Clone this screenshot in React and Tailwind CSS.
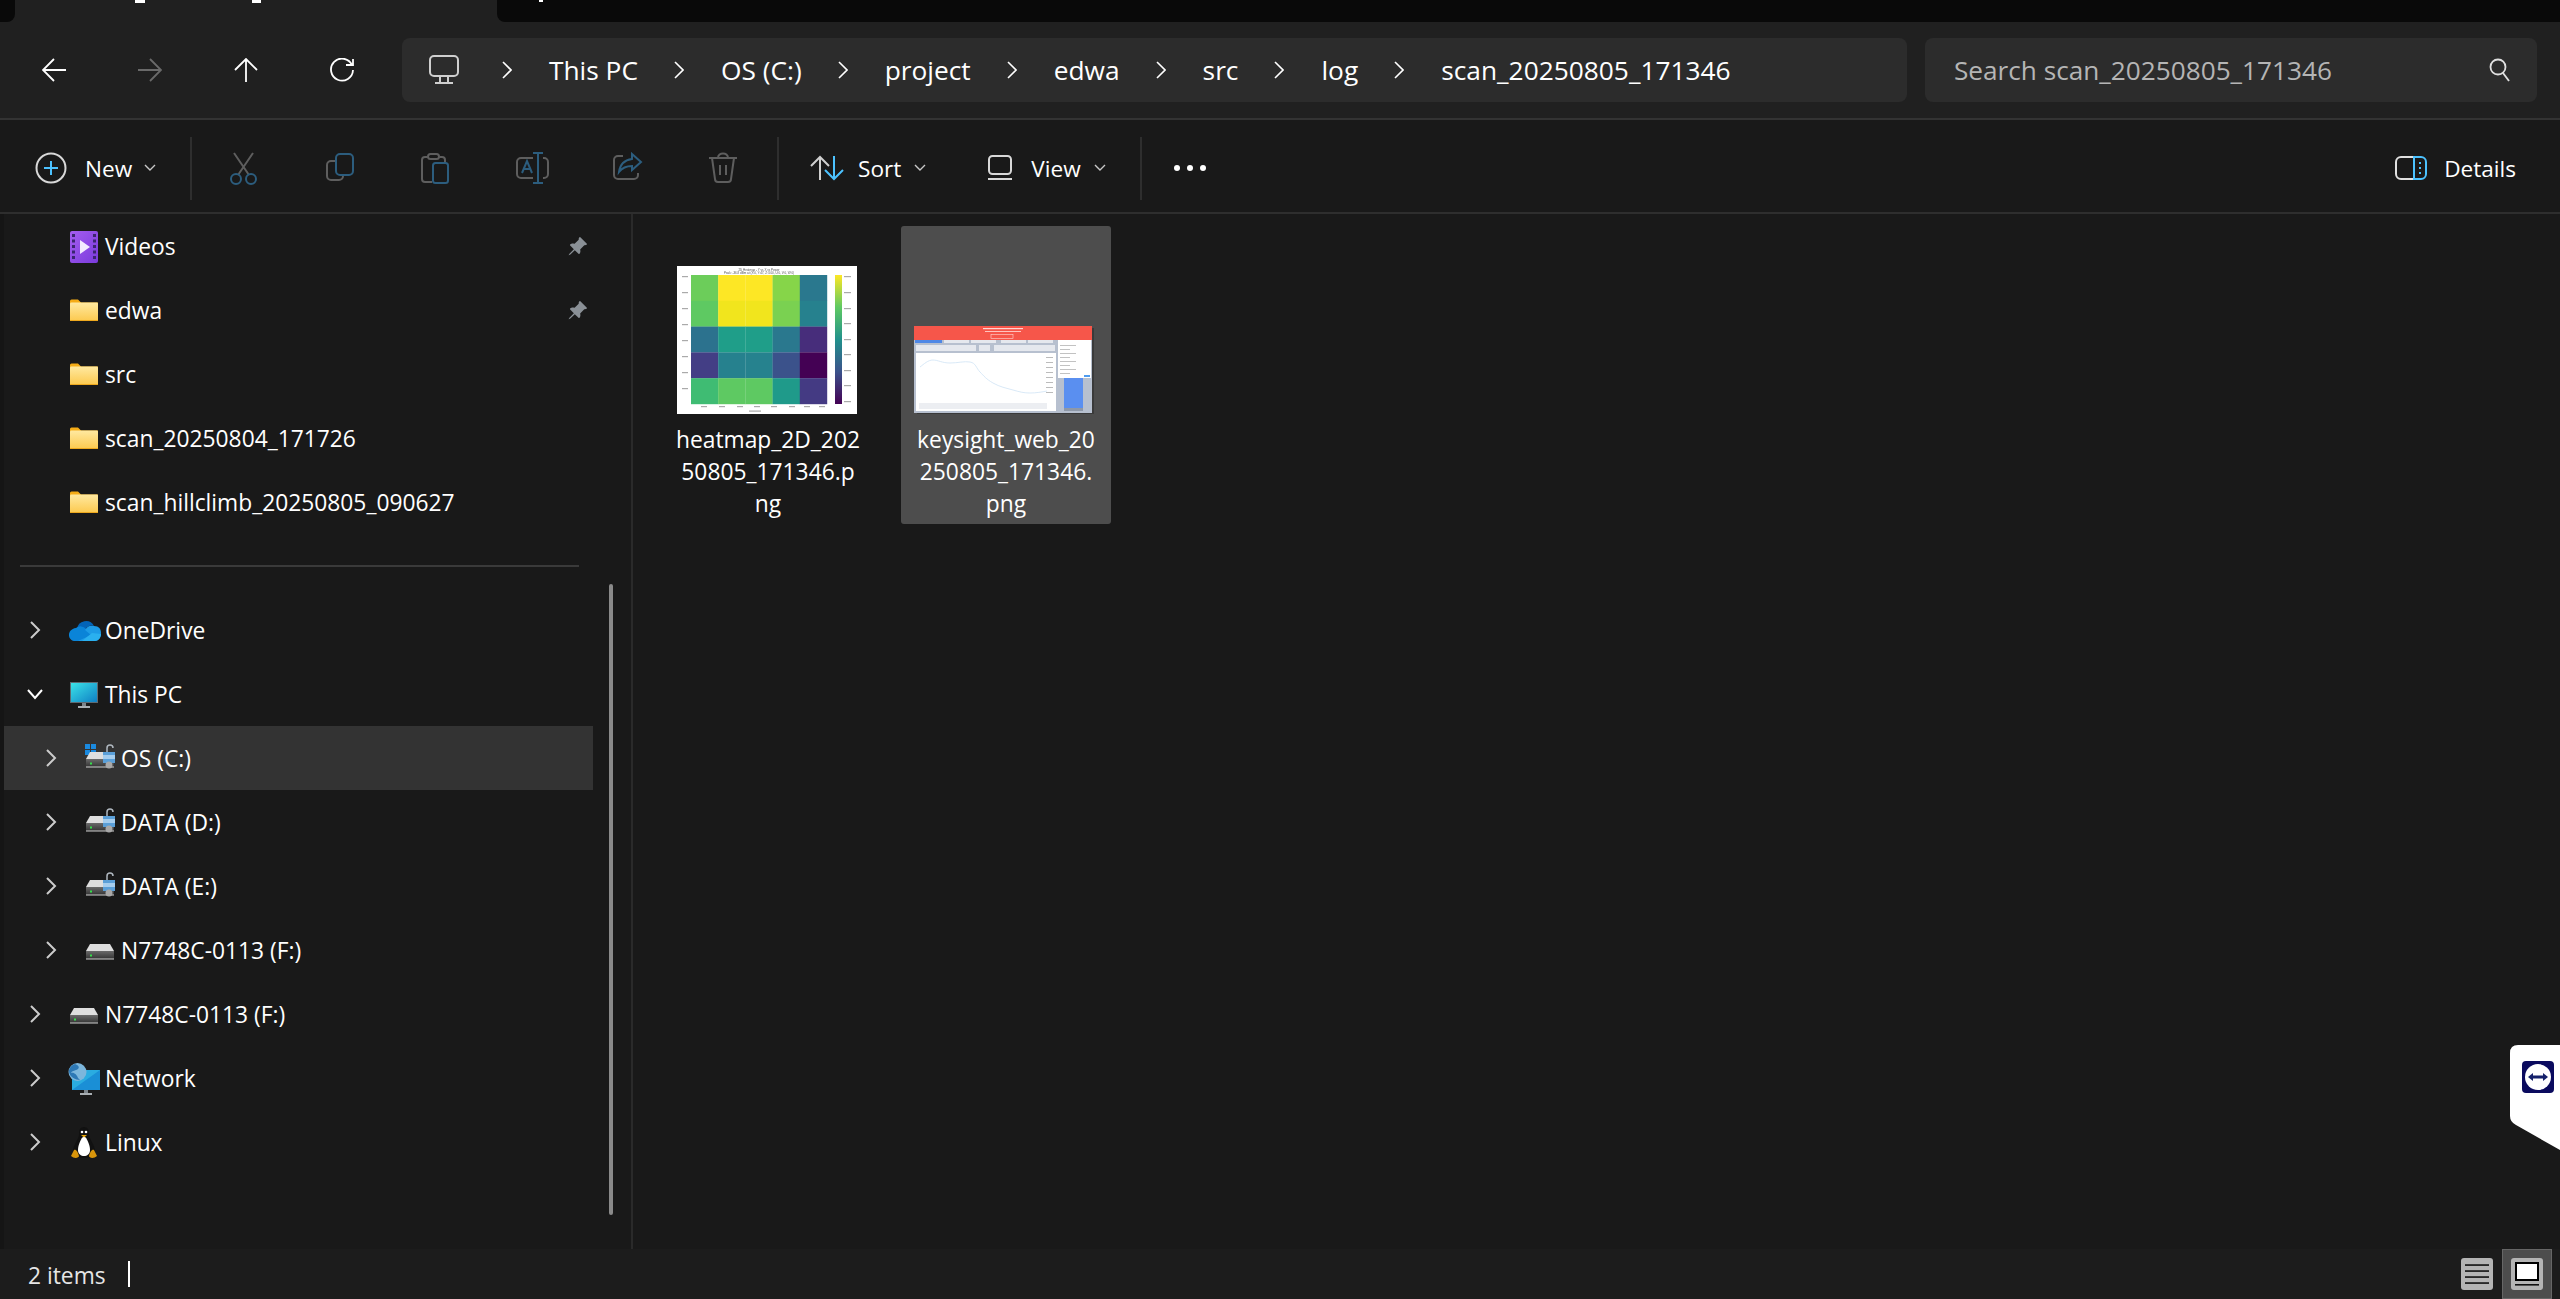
import React from "react";
import { BsPinAngleFill } from "react-icons/bs";

const Chevron = ({ down, className = "" }) => (
  <svg width="18" height="18" viewBox="0 0 18 18" fill="none" stroke="currentColor" strokeWidth="2" className={className}>
    {down ? <path d="M2 5l7 8 7-8" /> : <path d="M5 1l8 8-8 8" />}
  </svg>
);

const SmallCaret = () => (
  <svg width="12" height="8" viewBox="0 0 12 8" fill="none" stroke="#c8c8c8" strokeWidth="1.4">
    <path d="M1 1l5 5 5-5" />
  </svg>
);

const NavIcons = {
  back: <path d="M24 12H1M12 1L1 12l11 11" />,
  forward: <path d="M0 12h23M12 1l11 11-11 11" />,
  up: <path d="M12 24V1M1 12L12 1l11 11" />,
  refresh: <path d="M22 7A11 11 0 1 0 23 12M23 1v6h-7" />,
};

const NavButton = ({ icon, muted }) => (
  <div className="w-[96px] flex justify-center">
    <svg width="24" height="24" viewBox="0 0 24 24" fill="none" stroke={muted ? "#6a6a6a" : "#fff"} strokeWidth="1.8">
      {NavIcons[icon]}
    </svg>
  </div>
);

const BLUE = "#2c5d7e";
const GREY = "#5e5e5e";

const ToolIcons = {
  cut: (
    <>
      <path d="M6 1l15 22M25 1L10 23" stroke={GREY} />
      <circle cx="8" cy="27" r="5" stroke={BLUE} />
      <circle cx="23" cy="27" r="5" stroke={BLUE} />
    </>
  ),
  copy: (
    <>
      <rect x="12" y="2" width="17" height="21" rx="4" stroke={BLUE} />
      <path d="M11 9H7a4 4 0 0 0-4 4v11a4 4 0 0 0 4 4h8a4 4 0 0 0 4-4" stroke={GREY} />
    </>
  ),
  paste: (
    <>
      <path d="M8 5H5a3 3 0 0 0-3 3v19a3 3 0 0 0 3 3h7M19 5h3a3 3 0 0 1 3 3v3" stroke={GREY} />
      <rect x="8" y="2" width="11" height="5" rx="2.5" stroke={GREY} />
      <rect x="13" y="11" width="15" height="20" rx="2.5" stroke={BLUE} />
    </>
  ),
  rename: (
    <>
      <path d="M17 6H5a4 4 0 0 0-4 4v12a4 4 0 0 0 4 4h12M27 6h1a4 4 0 0 1 4 4v12a4 4 0 0 1-4 4h-1" stroke={GREY} />
      <path d="M22 1v30M17 1h10M17 31h10M6 21l5-12 5 12M8 17h6" stroke={BLUE} />
    </>
  ),
  share: (
    <>
      <path d="M11 4H6a4 4 0 0 0-4 4v15a4 4 0 0 0 4 4h16a4 4 0 0 0 4-4v-2" stroke={GREY} />
      <path d="M20 2l9 8-9 8v-4c-6 0-10 2-13 6 1-8 6-12 13-13z" stroke={BLUE} />
    </>
  ),
  trash: (
    <>
      <path d="M1 6h28M10 6c0-6 10-6 10 0M4 6l3 21a3 3 0 0 0 3 3h10a3 3 0 0 0 3-3l3-21M12 13v10M18 13v10" stroke={GREY} />
    </>
  ),
};

const ToolButton = ({ icon }) => (
  <div className="w-[96px] flex justify-center">
    <svg width="33" height="33" viewBox="0 0 33 33" fill="none" strokeWidth="2">
      {ToolIcons[icon]}
    </svg>
  </div>
);

const ToolSep = () => <div className="w-[2px] h-[63px] bg-[#2e2e2e] shrink-0" />;

const NewIcon = () => (
  <svg width="32" height="32" viewBox="0 0 32 32" fill="none" strokeWidth="2">
    <circle cx="16" cy="16" r="14.5" stroke="#d8d8d8" />
    <path d="M16 9v14M9 16h14" stroke="#4cc2ff" />
  </svg>
);

const SortIcon = () => (
  <svg width="34" height="26" viewBox="0 0 34 26" fill="none" strokeWidth="2">
    <path d="M10 25V2M1 11l9-9 9 9" stroke="#d0d0d0" />
    <path d="M24 1v23M15 15l9 9 9-9" stroke="#4cc2ff" />
  </svg>
);

const ViewIcon = () => (
  <svg width="24" height="25" viewBox="0 0 24 25" fill="none" stroke="#d8d8d8" strokeWidth="2">
    <rect x="1" y="1" width="22" height="18" rx="3.5" />
    <path d="M0 24h24" />
  </svg>
);

const DetailsIcon = () => (
  <svg width="32" height="24" viewBox="0 0 32 24" fill="none" strokeWidth="2">
    <path d="M19 1H6a5 5 0 0 0-5 5v12a5 5 0 0 0 5 5h13" stroke="#e0e0e0" />
    <path d="M19 1h7a5 5 0 0 1 5 5v12a5 5 0 0 1-5 5h-7z" stroke="#4cc2ff" />
    <path d="M25 6v2M25 11v2M25 16v2" stroke="#4cc2ff" />
  </svg>
);

const Folder = () => (
  <svg width="36" height="36" viewBox="0 0 36 36">
    <defs>
      <linearGradient id="folderFace" x1="0" y1="0" x2="0" y2="1">
        <stop offset="0" stopColor="#ffe9a0" />
        <stop offset="1" stopColor="#fcc94e" />
      </linearGradient>
    </defs>
    <path d="M2 8a1.5 1.5 0 0 1 1.5-1.5H10l3 3h17V14H2z" fill="#f5ac17" />
    <rect x="2" y="9.5" width="28" height="18.5" rx="1.2" fill="url(#folderFace)" />
    <path d="M2 27h28v1H2z" fill="#eda81e" />
  </svg>
);

const VideosIcon = () => (
  <svg width="36" height="36" viewBox="0 0 36 36">
    <defs>
      <linearGradient id="film" x1="0" y1="0" x2="1" y2="1">
        <stop offset="0" stopColor="#a45df0" />
        <stop offset="1" stopColor="#7a3bdc" />
      </linearGradient>
    </defs>
    <rect x="2" y="2" width="28" height="32" rx="2" fill="url(#film)" />
    {[5, 10.5, 16, 21.5, 27].map((y) => (
      <g key={y} fill="#3a2470">
        <rect x="4" y={y} width="3" height="3" />
        <rect x="25" y={y} width="3" height="3" />
      </g>
    ))}
    <path d="M12 11l10 7-10 7z" fill="#f3ecff" />
  </svg>
);

const OneDriveIcon = () => (
  <svg width="36" height="36" viewBox="0 0 36 36">
    <path d="M9 16a9 9 0 0 1 17-3 7 7 0 0 0-9 4z" fill="#0364b8" />
    <path d="M8 15a7 7 0 0 1 10 1l8 6-14 6H6c-7-1-7-12 2-13z" fill="#0a84d8" />
    <path d="M17 17a8 8 0 0 1 9-4c5 0 7 3 7 7 0 5-3 8-6 8H10l13-6z" fill="#1d9be6" />
    <path d="M14 28l10-8 9 1c0 4-3 7-6 7z" fill="#2ab0ef" />
  </svg>
);

const MonitorIcon = () => (
  <svg width="36" height="36" viewBox="0 0 36 36">
    <defs>
      <linearGradient id="screen" x1="0" y1="0" x2="1" y2="1">
        <stop offset="0" stopColor="#3be3e8" />
        <stop offset="1" stopColor="#0f7fc4" />
      </linearGradient>
    </defs>
    <rect x="2" y="5" width="28" height="21" fill="#5e6a72" />
    <rect x="3" y="6" width="26" height="19" fill="url(#screen)" />
    <rect x="14" y="26" width="4" height="3" fill="#7d858c" />
    <rect x="10" y="29" width="12" height="2" fill="#a8aeb3" />
  </svg>
);

const DriveIcon = ({ win, lock }) => (
  <svg width="36" height="36" viewBox="0 0 36 36">
    <defs>
      <linearGradient id="driveBody" x1="0" y1="0" x2="0" y2="1">
        <stop offset="0" stopColor="#6a6a6a" />
        <stop offset="1" stopColor="#333" />
      </linearGradient>
    </defs>
    {win && (
      <g fill="#1a8ae0">
        <rect x="1" y="3" width="5" height="5" />
        <rect x="7" y="3" width="5" height="5" />
        <rect x="1" y="9" width="5" height="5" />
        <rect x="7" y="9" width="5" height="5" />
      </g>
    )}
    <path d="M6 11h20l4 7H2z" fill="#dedede" />
    <rect x="2" y="18" width="28" height="8" fill="url(#driveBody)" />
    <rect x="2" y="25.5" width="28" height="1" fill="#cfcfcf" />
    <rect x="6" y="21.5" width="2" height="2" fill="#35e04a" />
    {lock && (
      <>
        <path d="M23 11V7a3 3 0 0 1 6 0" fill="none" stroke="#b0b8c0" strokeWidth="1.5" />
        <rect x="19" y="11" width="12" height="11" fill="#5a9fd8" />
        <rect x="19" y="14" width="12" height="4" fill="#a5cdee" />
        <circle cx="25" cy="24" r="3.5" fill="#a8a8a8" />
      </>
    )}
  </svg>
);

const NetworkIcon = () => (
  <svg width="36" height="36" viewBox="0 0 36 36">
    <rect x="4" y="9" width="28" height="20" fill="#1a8fd6" />
    <path d="M4 9h28L4 29z" fill="#35bfe8" opacity="0.6" />
    <rect x="16" y="29" width="4" height="3" fill="#7d858c" />
    <rect x="12" y="32" width="12" height="2" fill="#a8aeb3" />
    <circle cx="9.5" cy="11" r="9" fill="#7cb6dc" />
    <path d="M7 3c3 1 5 3 3 5s-6 1-7 4c3-1 6 2 7 5l2 2c-4 0-11-3-11-9 0-3 3-6 6-7z" fill="#2d78b5" />
  </svg>
);

const LinuxIcon = () => (
  <svg width="36" height="36" viewBox="0 0 36 36">
    <path d="M16 2c-4 0-5 3-5 7 0 5-6 11-6 17 0 4 5 7 11 7s11-3 11-7c0-6-6-12-6-17 0-4-1-7-5-7z" fill="#111" />
    <path d="M16 11c-3 2-6 9-6 14 0 4 3 6 6 6s6-2 6-6c0-5-3-12-6-14z" fill="#fff" />
    <circle cx="14" cy="7" r="1.3" fill="#fff" />
    <circle cx="18" cy="7" r="1.3" fill="#fff" />
    <path d="M13 10h6l-3 2.5z" fill="#e5a50a" />
    <path d="M3 31l3-6c2-1 4 2 5 6 0 2-5 3-8 0zM29 31l-3-6c-2-1-4 2-5 6 0 2 5 3 8 0z" fill="#d9960b" />
  </svg>
);

const Row = ({ level = 0, chevron, icon, label, pin, selected }) => (
  <div className={`h-16 flex items-center ${level ? "pl-[32px]" : "pl-[16px]"} ${selected ? "bg-[#333333]" : ""}`}>
    <div className={`w-[30px] flex justify-center ${chevron === "down" ? "text-white" : "text-[#cccccc]"}`}>
      {chevron && <Chevron down={chevron === "down"} />}
    </div>
    <div className="ml-[18px] w-[36px] shrink-0 pt-[2px]">{icon}</div>
    <span className="ml-px pt-[3px] text-[22.8px] text-white">{label}</span>
    {pin && (
      <span className="absolute left-[563px] text-[#8a9096]">
        <BsPinAngleFill size={21} />
      </span>
    )}
  </div>
);

const viridisRows = [
  ["#6ccd5a", "#fde725", "#fde725", "#86d549", "#2a788e"],
  ["#5ec962", "#f1e51d", "#f1e51d", "#7ad151", "#26818e"],
  ["#2c728e", "#1f9e89", "#1f9e89", "#2a788e", "#472d7b"],
  ["#433e85", "#26818e", "#26828e", "#3b528b", "#440154"],
  ["#3fbc73", "#5ec962", "#5ec962", "#1f9a8a", "#443a83"],
];

const HeatmapThumb = () => (
  <svg width="180" height="148" viewBox="0 0 180 148" className="block blur-[0.4px]">
    <defs>
      <linearGradient id="viridis" x1="0" y1="0" x2="0" y2="1">
        <stop offset="0" stopColor="#fde725" />
        <stop offset="0.25" stopColor="#5ec962" />
        <stop offset="0.5" stopColor="#21918c" />
        <stop offset="0.75" stopColor="#3b528b" />
        <stop offset="1" stopColor="#440154" />
      </linearGradient>
    </defs>
    <rect width="180" height="148" fill="#fff" />
    <text x="82" y="4.5" textAnchor="middle" fontSize="3" fill="#555" fontFamily="Liberation Sans, sans-serif">2D Heatmap - Y vs X vs Power</text>
    <text x="82" y="8.2" textAnchor="middle" fontSize="3" fill="#555" fontFamily="Liberation Sans, sans-serif">Peak: -36.8 dBm at (X:0, Y:47, Z:3.00, U:0, V:0, W:0)</text>
    {viridisRows.map((row, r) =>
      row.map((c, i) => <rect key={`${r}-${i}`} x={14 + i * 27.2} y={9 + r * 25.8} width="27.4" height="26" fill={c} />)
    )}
    <rect x="158" y="9" width="7" height="129" fill="url(#viridis)" />
    {[10, 26, 42, 57, 73, 88, 104, 119, 135].map((y) => (
      <rect key={y} x="167" y={y} width="7" height="1.2" fill="#aaa" />
    ))}
    {[10, 26, 42, 58, 74, 90, 106, 122].map((y) => (
      <rect key={y} x="5" y={y} width="6" height="1.2" fill="#aaa" />
    ))}
    {[27, 45, 63, 80, 97, 115, 130, 145].map((x) => (
      <rect key={x} x={x - 3} y="140" width="6" height="1.2" fill="#aaa" />
    ))}
    <rect x="72" y="144.5" width="12" height="1.2" fill="#aaa" />
  </svg>
);

const KeysightThumb = () => (
  <svg width="180" height="88" viewBox="0 0 180 88" className="block mr-[4px] blur-[0.3px]">
    <rect x="3" y="2" width="177" height="86" fill="#3a3a3a" />
    <rect width="178" height="87" fill="#b7c0cf" />
    <rect width="178" height="14" fill="#f6564a" />
    <rect x="69" y="2" width="40" height="1.2" fill="#ffd7d3" />
    <rect x="71" y="5" width="36" height="1" fill="#ffc4bf" />
    <rect x="77" y="8.5" width="22" height="4" fill="none" stroke="#ffd7d3" strokeWidth="0.6" />
    <rect x="1" y="14" width="27" height="3" fill="#4f88e6" />
    {[30, 57, 87, 114].map((x) => (
      <rect key={x} x={x} y="14" width="25" height="3" fill="#e5e8ee" />
    ))}
    <rect x="2" y="19" width="60" height="6" fill="#e5e8ee" />
    <rect x="65" y="19" width="11" height="6" fill="#e5e8ee" />
    <rect x="80" y="19" width="61" height="6" fill="#e5e8ee" />
    <rect x="2" y="27" width="140" height="58" fill="#fff" />
    <path d="M6 41C10 38 14 34 19 34S28 37 36 37 50 35 56 36 62 42 66 46 72 53 79 57 92 62 99 64 110 67 116 67 128 66 133 65" fill="none" stroke="#cfe3f5" strokeWidth="0.8" />
    <rect x="5" y="77" width="128" height="6" fill="#eceef2" />
    {[38, 43, 48, 53, 58, 63, 68, 73].map((y) => (
      <rect key={y} x="132" y={y - 7} width="7" height="0.8" fill="#aaa" />
    ))}
    <rect x="144" y="14" width="33" height="38" fill="#fff" />
    {[19, 23, 27, 31, 35, 39, 43, 47].map((y) => (
      <rect key={y} x="146" y={y} width={y % 8 === 3 ? 16 : 10} height="0.9" fill="#bbb" />
    ))}
    <rect x="170" y="49" width="6" height="2" fill="#4f9cf0" />
    <rect x="150" y="52" width="19" height="30" fill="#5a8ff0" />
    <rect x="150" y="82" width="19" height="3" fill="#8e98a8" />
  </svg>
);

const ListViewIcon = () => (
  <svg width="32" height="32" viewBox="0 0 32 32">
    <rect width="32" height="32" rx="3" fill="#b4b4b4" />
    {[7, 13, 19, 25].map((y) => (
      <rect key={y} x="4" y={y - 0.75} width="24" height="1.6" fill="#111" />
    ))}
  </svg>
);

const TileViewIcon = () => (
  <svg width="32" height="32" viewBox="0 0 32 32">
    <rect width="32" height="32" rx="3" fill="#b4b4b4" />
    <rect x="5" y="5" width="22" height="17" fill="#fff" stroke="#000" strokeWidth="2" />
    <rect x="4" y="26" width="24" height="1.6" fill="#111" />
  </svg>
);

const TeamViewerBadge = () => (
  <svg width="50" height="105" viewBox="0 0 50 105" className="absolute right-0 top-[1045px]">
    <path d="M8 0h42v105L6 80q-6-3-6-9V8q0-8 8-8z" fill="#fff" />
    <rect x="12" y="16" width="32" height="32" rx="4" fill="#0a0a5e" />
    <circle cx="28" cy="32" r="13" fill="#fff" />
    <path d="M18 32l5-4v2.5h10V28l5 4-5 4v-2.5H23V36z" fill="#14206b" />
  </svg>
);

const crumbs = ["This PC", "OS (C:)", "project", "edwa", "src", "log", "scan_20250805_171346"];

const App = () => {
  return (
    <div className="relative h-screen overflow-hidden flex flex-col bg-[#191919] text-white font-['Open_Sans',sans-serif]">
      {/* clipped tab strip */}
      <div className="h-[22px] flex shrink-0 bg-[#202020]">
        <div className="w-[15px] bg-[#090909] rounded-br-lg" />
        <div className="w-[482px] flex items-start">
          <div className="ml-[120px] w-[10px] h-[3px] bg-white" />
          <div className="ml-[107px] w-[9px] h-[3px] bg-white" />
        </div>
        <div className="flex-1 bg-[#090909] rounded-bl-lg">
          <div className="ml-[42px] w-[4px] h-[2px] bg-white" />
        </div>
      </div>

      {/* address row */}
      <div className="h-[98px] shrink-0 flex items-start bg-[#202020] border-b-2 border-[#333333]">
        <div className="flex items-center h-[64px] mt-[16px] pl-[6px] w-[402px]">
          <NavButton icon="back" />
          <NavButton icon="forward" muted />
          <NavButton icon="up" />
          <NavButton icon="refresh" />
        </div>
        <div className="mt-[16px] h-[64px] w-[1505px] rounded-lg bg-[#2c2c2c] flex items-center pl-[27px]">
          <svg width="30" height="30" viewBox="0 0 30 30" fill="none" stroke="#cfcfcf" strokeWidth="2" className="mr-[7px]">
            <rect x="1" y="1" width="28" height="20" rx="4" />
            <path d="M11 22v5M19 22v5M6 28h18" />
          </svg>
          {crumbs.map((c) => (
            <div key={c} className="flex items-center">
              <svg width="10" height="18" viewBox="0 0 10 18" fill="none" stroke="#fff" strokeWidth="1.6" className="ml-[36px] mr-[37px]">
                <path d="M1 1l8 8-8 8" />
              </svg>
              <span className="text-[26.3px] leading-none">{c}</span>
            </div>
          ))}
        </div>
        <div className="mt-[16px] ml-[18px] h-[64px] w-[612px] rounded-lg bg-[#2c2c2c] flex items-center justify-between pl-[29px] pr-[26px]">
          <span className="text-[26.2px] leading-none text-[#b5b5b5]">Search scan_20250805_171346</span>
          <svg width="22" height="24" viewBox="0 0 22 24" fill="none" stroke="#e0e0e0" strokeWidth="1.8">
            <circle cx="9" cy="9" r="7.5" />
            <path d="M14 15l6 8" />
          </svg>
        </div>
      </div>

      {/* command bar */}
      <div className="h-[94px] shrink-0 flex items-center pt-[4px] border-b-2 border-[#2e2e2e] bg-[#191919]">
        <div className="flex items-center w-[190px] pl-[35px]">
          <NewIcon />
          <span className="ml-[18px] pt-[1px] text-[22.6px]">New</span>
          <span className="ml-[12px]"><SmallCaret /></span>
        </div>
        <ToolSep />
        <div className="flex items-center ml-[4px] w-[581px]">
          <ToolButton icon="cut" />
          <ToolButton icon="copy" />
          <ToolButton icon="paste" />
          <ToolButton icon="rename" />
          <ToolButton icon="share" />
          <ToolButton icon="trash" />
        </div>
        <ToolSep />
        <div className="flex items-center ml-[31px]">
          <SortIcon />
          <span className="ml-[14px] pt-[1px] text-[22.6px]">Sort</span>
          <span className="ml-[13px]"><SmallCaret /></span>
        </div>
        <div className="flex items-center ml-[62px]">
          <ViewIcon />
          <span className="ml-[19px] pt-[1px] text-[22.6px]">View</span>
          <span className="ml-[13px]"><SmallCaret /></span>
        </div>
        <div className="ml-[34px]"><ToolSep /></div>
        <div className="ml-[32px] flex gap-[7px]">
          <div className="w-[6px] h-[6px] rounded-full bg-white" />
          <div className="w-[6px] h-[6px] rounded-full bg-white" />
          <div className="w-[6px] h-[6px] rounded-full bg-white" />
        </div>
        <div className="ml-auto flex items-center pr-[44px]">
          <DetailsIcon />
          <span className="ml-[17px] pt-[1px] text-[22.6px]">Details</span>
        </div>
      </div>

      {/* body */}
      <div className="flex-1 min-h-0 flex">
        <div className="relative w-[633px] shrink-0 border-l-4 border-l-[#151515] border-r-2 border-r-[#2a2a2a] overflow-hidden">
          <div className="w-[589px]">
            <Row icon={<VideosIcon />} label="Videos" pin />
            <Row icon={<Folder />} label="edwa" pin />
            <Row icon={<Folder />} label="src" />
            <Row icon={<Folder />} label="scan_20250804_171726" />
            <Row icon={<Folder />} label="scan_hillclimb_20250805_090627" />
            <div className="mt-[31px] mb-[31px] ml-[16px] w-[559px] h-[2px] bg-[#3a3a3a]" />
            <Row chevron="right" icon={<OneDriveIcon />} label="OneDrive" />
            <Row chevron="down" icon={<MonitorIcon />} label="This PC" />
            <Row level={1} chevron="right" icon={<DriveIcon win lock />} label="OS (C:)" selected />
            <Row level={1} chevron="right" icon={<DriveIcon lock />} label="DATA (D:)" />
            <Row level={1} chevron="right" icon={<DriveIcon lock />} label="DATA (E:)" />
            <Row level={1} chevron="right" icon={<DriveIcon />} label="N7748C-0113 (F:)" />
            <Row chevron="right" icon={<DriveIcon />} label="N7748C-0113 (F:)" />
            <Row chevron="right" icon={<NetworkIcon />} label="Network" />
            <Row chevron="right" icon={<LinuxIcon />} label="Linux" />
          </div>
          {/* overlay scrollbar */}
          <div className="absolute left-[605px] top-[370px] w-[4px] h-[631px] rounded-full bg-[#8a8a8a]" />
        </div>

        <div className="flex-1 flex items-start pt-[12px] pl-[29px] gap-[29px]">
          <div className="w-[210px] h-[298px] flex flex-col items-center">
            <div className="h-[188px] flex items-end"><HeatmapThumb /></div>
            <div className="mt-[10px] pl-[2px] text-[22.8px] leading-[32px] text-center whitespace-nowrap">
              heatmap_2D_202<br />50805_171346.p<br />ng
            </div>
          </div>
          <div className="w-[210px] h-[298px] flex flex-col items-center bg-[#4d4d4d] rounded-[3px]">
            <div className="h-[188px] flex items-end"><KeysightThumb /></div>
            <div className="mt-[10px] text-[22.8px] leading-[32px] text-center whitespace-nowrap">
              keysight_web_20<br />250805_171346.<br />png
            </div>
          </div>
        </div>
      </div>

      {/* status bar */}
      <div className="h-[50px] shrink-0 flex items-center bg-[#1c1c1c] pl-[28px]">
        <span className="pt-[4px] text-[22.8px] text-[#e6e6e6]">2 items</span>
        <div className="ml-[22px] w-[2px] h-[26px] bg-white" />
        <div className="ml-auto flex items-center gap-[9px] pr-[8px]">
          <ListViewIcon />
          <div className="w-[50px] h-[50px] flex items-center justify-center bg-[#4d4d4d] border border-[#666666]">
            <TileViewIcon />
          </div>
        </div>
      </div>

      <TeamViewerBadge />
    </div>
  );
};

export default App;
